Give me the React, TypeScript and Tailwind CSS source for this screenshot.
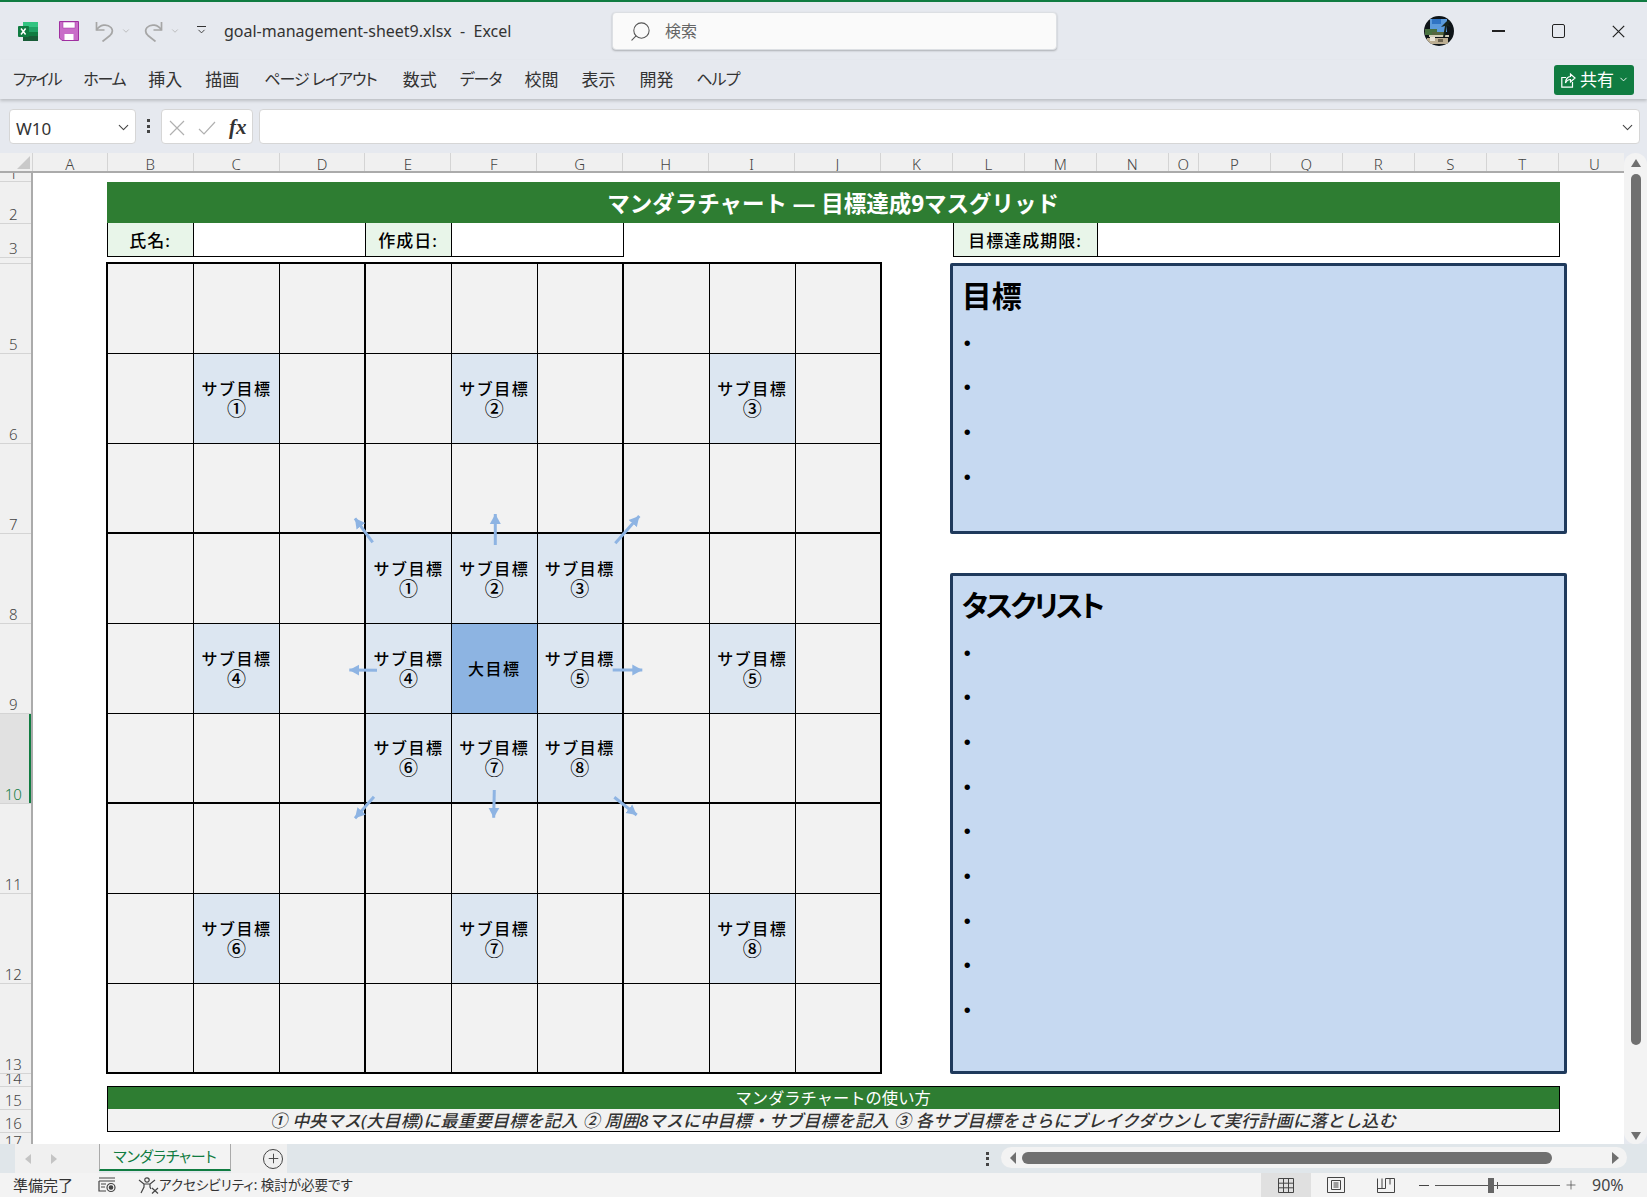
import React from "react";
import { ChevronDown, Plus, Search } from "lucide-react";

const palt = "[font-feature-settings:'palt']";

const tabs: [string, string][] = [
  ["ファイル", "text-[16px] tracking-[-2px]"],
  ["ホーム", "text-[16px] tracking-[-1.300px]"],
  ["挿入", "text-[17px]"],
  ["描画", "text-[17px]"],
  ["ページ レイアウト", "ml-[2px] mr-[3px] text-[16px] tracking-[-1px]"],
  ["数式", "text-[17px]"],
  ["データ", "text-[16px] tracking-[-1px]"],
  ["校閲", "text-[17px]"],
  ["表示", "text-[17px]"],
  ["開発", "ml-[1px] text-[17px]"],
  ["ヘルプ", "text-[16px] tracking-[-1px]"],
];

const columns: [string, string][] = [
  ["A", "w-[75.2px]"],
  ["B", "w-[85.9px]"],
  ["C", "w-[85.9px]"],
  ["D", "w-[85.9px]"],
  ["E", "w-[85.9px]"],
  ["F", "w-[85.9px]"],
  ["G", "w-[85.9px]"],
  ["H", "w-[85.9px]"],
  ["I", "w-[85.9px]"],
  ["J", "w-[85.9px]"],
  ["K", "w-[72px]"],
  ["L", "w-[72px]"],
  ["M", "w-[72px]"],
  ["N", "w-[72px]"],
  ["O", "w-[30px]"],
  ["P", "w-[72px]"],
  ["Q", "w-[72px]"],
  ["R", "w-[72px]"],
  ["S", "w-[72px]"],
  ["T", "w-[72px]"],
  ["U", "w-[72px]"],
];

const rows: [string, string][] = [
  ["1", "h-[9.3px] items-end"],
  ["2", "h-[41.3px] items-end pb-[1px]"],
  ["3", "h-[34px] items-end pb-[1px]"],
  ["", "h-[6px] items-end"],
  ["5", "h-[90px] items-end pb-[1px]"],
  ["6", "h-[90px] items-end pb-[1px]"],
  ["7", "h-[90px] items-end pb-[1px]"],
  ["8", "h-[90px] items-end pb-[1px]"],
  ["9", "h-[90px] items-end pb-[1px]"],
  ["10", "h-[90px] items-end pb-[1px] bg-[#e1e1e1] text-[#107c41]"],
  ["11", "h-[90px] items-end pb-[1px]"],
  ["12", "h-[90px] items-end pb-[1px]"],
  ["13", "h-[90px] items-end pb-[1px]"],
  ["14", "h-[13px] items-end"],
  ["15", "h-[23px] items-end pb-[1px]"],
  ["16", "h-[23px] items-end pb-[1px]"],
  ["17", "h-[12px] items-start"],
];

const subCells: Record<string, string> = {
  "1-1": "①", "1-4": "②", "1-7": "③",
  "4-1": "④", "4-7": "⑤",
  "7-1": "⑥", "7-4": "⑦", "7-7": "⑧",
  "3-3": "①", "3-4": "②", "3-5": "③",
  "4-3": "④", "4-5": "⑤",
  "5-3": "⑥", "5-4": "⑦", "5-5": "⑧",
};

const arrows = [
  [265.7, 279.3, 248, 255.3],
  [388.3, 282, 388.3, 251],
  [508.3, 280.3, 532.3, 253],
  [270, 407.3, 242.3, 407],
  [505.7, 407, 535.3, 407],
  [267, 533.7, 248, 555.3],
  [387.3, 527, 386.7, 554.7],
  [507.3, 534.3, 529.7, 552],
];

const ExcelIcon = () => (
  <svg width="21" height="21" viewBox="0 0 21 21">
    <rect x="5" y="1" width="15" height="19" rx="1" fill="#21a366" />
    <rect x="5" y="1" width="15" height="5" fill="#33c481" />
    <rect x="12" y="6" width="8" height="5" fill="#21a366" />
    <rect x="5" y="11" width="15" height="4" fill="#107c41" />
    <rect x="5" y="15" width="15" height="5" fill="#185c37" />
    <rect x="0" y="5" width="11" height="11" rx="1" fill="#107c41" />
    <path d="M3 7.500l4.600 6M7.600 7.500L3 13.500" stroke="#fff" strokeWidth="1.500" fill="none" />
  </svg>
);

const SaveIcon = () => (
  <svg width="20" height="20" viewBox="0 0 20 20">
    <path d="M.5.500h19v19H3l-2.500-2.500z" fill="#c86dc8" stroke="#a02fa0" />
    <rect x="4" y="1" width="12" height="6" fill="#fff" stroke="#a02fa0" strokeWidth=".5" />
    <rect x="5.500" y="13" width="9" height="6" fill="#fff" />
  </svg>
);

const UndoIcon = ({ flip }: { flip?: boolean }) => (
  <svg width="19" height="21" viewBox="0 0 19 21" className={flip ? "-scale-x-100" : ""} fill="none" stroke="#a6a6a6" strokeWidth="1.700">
    <path d="M1.500 1v8h8" />
    <path d="M1.500 9C5 3.500 12 2.500 16 6.500c2.500 3 1 6-1 8L7.500 20.500" />
  </svg>
);

const Cross = ({ size, color, width = 1.2 }: { size: number; color: string; width?: number }) => (
  <svg width={size} height={size} viewBox="0 0 16 16" fill="none" stroke={color} strokeWidth={width}>
    <path d="M1 1l14 14M15 1L1 15" />
  </svg>
);

const ShareIcon = () => (
  <svg width="15" height="16" viewBox="0 0 15 16" fill="none" stroke="#fff" strokeWidth="1.200">
    <path d="M5 5.500H.8v9.700h10.700V10" />
    <path d="M4.500 11c0-4 2.500-6.500 5-6.500V2L14 6l-4.500 4V7.500C7.500 7.500 5.500 9 4.500 11z" />
  </svg>
);

const Avatar = () => (
  <svg width="30" height="30" viewBox="0 0 30 30">
    <defs>
      <clipPath id="avatar-clip">
        <circle cx="15" cy="15" r="15" />
      </clipPath>
    </defs>
    <g clipPath="url(#avatar-clip)">
      <rect width="30" height="30" fill="#0e1418" />
      <rect x="6" y="3" width="17" height="13" fill="#5b9bdc" />
      <rect x="8" y="3" width="9" height="5" fill="#2f74c4" />
      <rect x="1" y="13" width="12" height="6" fill="#47703f" />
      <rect x="5" y="19" width="20" height="2" fill="#d0cdb8" />
      <rect x="8" y="16" width="12" height="3" fill="#55663f" />
      <rect x="3" y="22" width="21" height="6" fill="#bcae92" />
      <rect x="6" y="21" width="5" height="4" fill="#e9e5d8" />
      <rect x="14" y="23" width="5" height="3" fill="#6d6450" />
      <path d="M21 7c2-3 5-3 6-2l-3 3 3 3-4-1-2 11h-2l2-11-4 1z" fill="#18251c" />
    </g>
  </svg>
);

const Cell = ({ row, col }: { row: number; col: number }) => {
  const sub = subCells[`${row}-${col}`];
  const center = row === 4 && col === 4;
  return (
    <div
      className={`flex items-center justify-center border-black text-center text-[16px] font-medium leading-[20px] text-black
        ${col === 2 || col === 5 || col === 8 ? "border-r-2" : "border-r"}
        ${row === 2 || row === 5 || row === 8 ? "border-b-2" : "border-b"}
        ${center ? "bg-[#8db4e2]" : sub ? "bg-[#dce6f1]" : "bg-[#f2f2f2]"}`}
    >
      {center ? (
        <span className="tracking-[1.500px]">大目標</span>
      ) : sub ? (
        <div>
          <div className="tracking-[1.500px]">サブ目標</div>
          <div className="text-[19px]">{sub}</div>
        </div>
      ) : null}
    </div>
  );
};

const Panel = ({ title, count, height, titleClass }: { title: string; count: number; height: string; titleClass: string }) => (
  <div className={`${height} rounded-[2px] border-[3px] border-[#1f3a5c] bg-[#c6d9f1] pl-[9px] text-black`}>
    <div className={`flex h-[54px] items-center pt-[5px] font-bold ${titleClass} ${palt}`}>{title}</div>
    {Array.from({ length: count }, (_, i) => (
      <div key={i} className="flex h-[44.7px] items-center pl-[2px] text-[20px] [font-family:'Liberation_Sans',sans-serif]">•</div>
    ))}
  </div>
);

export default function App() {
  return (
    <div className="flex h-[1197px] w-[1647px] flex-col overflow-hidden bg-[#e6e9ef] text-[#333] [font-family:'Noto_Sans','Noto_Sans_CJK_JP',sans-serif]">
      <div className="h-[2px] bg-[#107c41]" />

      {/* title bar */}
      <div className="flex h-[58px] items-center">
        <div className="ml-[18px]"><ExcelIcon /></div>
        <div className="ml-[20px]"><SaveIcon /></div>
        <div className="ml-[16px]"><UndoIcon /></div>
        <ChevronDown size={10} className="ml-[7px] text-[#b5b5b5]" />
        <div className="ml-[13px]"><UndoIcon flip /></div>
        <ChevronDown size={10} className="ml-[7px] text-[#b5b5b5]" />
        <div className="ml-[16px] flex flex-col items-center">
          <div className="h-[1px] w-[9px] bg-[#333]" />
          <ChevronDown size={11} className="-mt-[1px] text-[#333]" />
        </div>
        <div className="ml-[17px] w-[388px] whitespace-nowrap text-[16px] text-[#333]">goal-management-sheet9.xlsx&nbsp; - &nbsp;Excel</div>
        <div className="flex h-[38px] w-[445px] items-center rounded-[4px] border border-[#dcdfe3] bg-[#fafafa] pl-[16px] shadow-[0_1px_2px_rgba(0,0,0,0.25)]">
          <Search size={23} strokeWidth={1.100} className="-scale-x-100 text-[#555]" />
          <span className="ml-[13px] text-[16px] text-[#666]">検索</span>
        </div>
        <div className="ml-[367px]"><Avatar /></div>
        <div className="ml-[38px] h-[1.500px] w-[13px] bg-[#222]" />
        <div className="ml-[47px] h-[14px] w-[13px] rounded-[2px] border-[1.500px] border-[#222]" />
        <div className="ml-[47px]"><Cross size={13} color="#222" width={1.500} /></div>
      </div>

      {/* ribbon tabs */}
      <div className="flex h-[39px] items-center shadow-[0_2px_3px_rgba(0,0,0,0.18)]">
        <div className={`flex flex-1 gap-[23px] pl-[13px] text-[#333] ${palt}`}>
          {tabs.map(([t, cls]) => (
            <span key={t} className={`whitespace-nowrap ${cls}`}>{t}</span>
          ))}
        </div>
        <div className="mr-[13px] flex h-[30px] w-[80px] items-center gap-[4px] rounded-[3px] bg-[#107c41] pl-[7px] text-[17px] text-white">
          <ShareIcon />
          <span>共有</span>
          <ChevronDown size={11} strokeWidth={2} />
        </div>
      </div>

      {/* formula bar */}
      <div className="flex h-[54px] items-start pt-[10px]">
        <div className="ml-[9px] flex h-[35px] w-[127px] items-center justify-between rounded-[4px] border border-[#d6d6d6] bg-white pl-[6px] pr-[3px] pt-[2px] text-[17px] text-[#333]">
          <span className="pt-[2px]">W10</span>
          <ChevronDown size={17} strokeWidth={1.500} className="text-[#444]" />
        </div>
        <div className="ml-[11px] mt-[10px] flex w-[3px] flex-col gap-[2.500px]">
          <div className="h-[3px] bg-[#444]" />
          <div className="h-[3px] bg-[#444]" />
          <div className="h-[3px] bg-[#444]" />
        </div>
        <div className="ml-[11px] flex h-[35px] w-[92px] items-center rounded-[4px] border border-[#d6d6d6] bg-white pl-[7px] pt-[2px]">
          <Cross size={16} color="#b0b0b0" />
          <svg width="18" height="14" viewBox="0 0 18 14" fill="none" stroke="#b0b0b0" strokeWidth="1.200" className="ml-[13px]">
            <path d="M1 8l5 5L17 1" />
          </svg>
          <span className="ml-[13px] text-[21px] font-bold italic leading-none text-[#333] [font-family:'Liberation_Serif',serif]">fx</span>
        </div>
        <div className="ml-[6px] flex h-[35px] w-[1381px] items-center justify-end rounded-[4px] border border-[#d6d6d6] bg-white pr-[3px] pt-[2px]">
          <ChevronDown size={17} strokeWidth={1.500} className="text-[#444]" />
        </div>
      </div>

      {/* sheet */}
      <div className="flex h-[991px]">
        <div className="flex w-[1624px] flex-col bg-white">
          <div className="flex h-[20px] overflow-hidden border-b-2 border-[#ababab] bg-[#f0f0f0] text-[15px] font-light leading-[18px] text-[#444]">
            <div className="flex h-full w-[32.6px] shrink-0 items-end justify-end border-r border-[#d4d4d4] p-[2px]">
              <div className="h-0 w-0 border-b-[13px] border-l-[13px] border-b-[#c9c9c9] border-l-transparent" />
            </div>
            {columns.map(([name, width]) => (
              <div key={name} className={`${width} shrink-0 border-r border-[#d4d4d4] pt-[2px] text-center`}>{name}</div>
            ))}
          </div>

          <div className="flex flex-1 overflow-hidden">
            <div className="w-[32.6px] shrink-0 border-r-2 border-[#ababab] bg-[#f0f0f0] text-[15px] font-light leading-[16px] text-[#444]">
              {rows.map(([name, cls], i) => (
                <div key={i} className={`relative flex ${cls} justify-center overflow-hidden border-b border-[#d4d4d4] pr-[4px]`}>
                  {name}
                  {name === "10" && <div className="absolute bottom-0 right-0 top-0 w-[2px] bg-[#107c41]" />}
                </div>
              ))}
            </div>

            <div className="pl-[74px] pt-[9.3px]">
              <div className="flex h-[41px] w-[1453px] items-center justify-center bg-[#2e7d32] pt-[3px] text-[22.500px] font-bold text-white">
                マンダラチャート — 目標達成9マスグリッド
              </div>

              <div className="flex h-[34px] text-[17px] font-medium tracking-[1px] text-black">
                <div className="flex w-[517px] border-b border-l border-r border-black">
                  <div className="flex w-[86px] items-center justify-center border-r border-black bg-[#e8f5e9] pt-[2px]">氏名:</div>
                  <div className="w-[172px] border-r border-black" />
                  <div className="flex w-[86px] items-center justify-center border-r border-black bg-[#e8f5e9] pt-[2px]">作成日:</div>
                </div>
                <div className="ml-[329px] flex w-[607px] border-b border-l border-r border-black">
                  <div className="flex w-[144px] items-center justify-center border-r border-black bg-[#e8f5e9] pt-[2px]">目標達成期限:</div>
                </div>
              </div>

              <div className="mt-[5px] flex">
                <div className="relative -ml-[0.6px] grid grid-cols-[repeat(9,85.97px)] grid-rows-[repeat(9,90px)] border-l-2 border-t-2 border-black">
                  {Array.from({ length: 81 }, (_, i) => (
                    <Cell key={i} row={Math.floor(i / 9)} col={i % 9} />
                  ))}
                  <svg width="775" height="811" className="absolute -left-[1px] -top-[1.3px] overflow-visible">
                    <defs>
                      <marker id="head" markerUnits="userSpaceOnUse" markerWidth="12" markerHeight="12" refX="10" refY="6" orient="auto">
                        <path d="M0 .5L10 6L0 11.500z" fill="#8eb4e3" />
                      </marker>
                    </defs>
                    {arrows.map(([x1, y1, x2, y2], i) => (
                      <line key={i} x1={x1} y1={y1} x2={x2} y2={y2} stroke="#8eb4e3" strokeWidth="3" markerEnd="url(#head)" />
                    ))}
                  </svg>
                </div>
                <div className="ml-[68px] mt-[1px] flex w-[617px] flex-col gap-[39px]">
                  <Panel title="目標" count={4} height="h-[271px]" titleClass="text-[30px]" />
                  <Panel title="タスクリスト" count={9} height="h-[501px]" titleClass="text-[29px] tracking-[-2.600px]" />
                </div>
              </div>

              <div className="mt-[12px] w-[1453px] border border-black text-center">
                <div className="flex h-[22px] items-center justify-center bg-[#2e7d32] text-[16.300px] text-white">マンダラチャートの使い方</div>
                <div className="flex h-[22px] items-center justify-center whitespace-nowrap bg-[#f2f2f2] text-[17px] font-medium italic tracking-[0.2px] text-[#333]">
                  ① 中央マス(大目標)に最重要目標を記入 ② 周囲8マスに中目標・サブ目標を記入 ③ 各サブ目標をさらにブレイクダウンして実行計画に落とし込む
                </div>
              </div>
            </div>
          </div>
        </div>

        {/* vertical scrollbar */}
        <div className="flex h-[991px] w-[23px] flex-col items-center rounded-full bg-[#f3f3f3]">
          <div className="mt-[6px] h-0 w-0 border-x-[5px] border-b-[8px] border-x-transparent border-b-[#707070]" />
          <div className="mt-[7px] h-[871px] w-[10px] shrink-0 rounded-full bg-[#707070]" />
          <div className="mt-[87px] h-0 w-0 border-x-[5px] border-t-[8px] border-x-transparent border-t-[#707070]" />
        </div>
      </div>

      {/* sheet tabs */}
      <div className="flex h-[29px] items-stretch bg-[#e0e6ea]">
        <div className="ml-[15px] flex w-[84px] items-center gap-[20px] bg-[#f0f0f0] pl-[10px]">
          <div className="h-0 w-0 border-y-[5px] border-r-[6px] border-y-transparent border-r-[#c4c4c4]" />
          <div className="h-0 w-0 border-y-[5px] border-l-[6px] border-y-transparent border-l-[#c4c4c4]" />
        </div>
        <div className={`flex h-[27px] w-[132px] items-center justify-center border-b-[2px] border-x border-x-[#aaa] border-b-[#107c41] bg-[#f3f3f3] text-[15px] tracking-[-0.3px] text-[#107c41] ${palt}`}>
          マンダラチャート
        </div>
        <div className="flex w-[56px] items-center justify-end bg-[#f0f0f0] pr-[4px]">
          <div className="flex h-[20px] w-[20px] items-center justify-center rounded-full border border-[#444]">
            <Plus size={15} strokeWidth={1.500} className="text-[#444]" />
          </div>
        </div>
        <div className="ml-[693px] flex w-[14px] flex-col items-center justify-center gap-[2.500px]">
          <div className="h-[3px] w-[3px] bg-[#444]" />
          <div className="h-[3px] w-[3px] bg-[#444]" />
          <div className="h-[3px] w-[3px] bg-[#444]" />
        </div>
        <div className="ml-[7px] mt-[3px] flex h-[21px] w-[626px] items-center rounded-full bg-[#f3f3f3] pl-[9px]">
          <div className="h-0 w-0 border-y-[6px] border-r-[6px] border-y-transparent border-r-[#707070]" />
          <div className="ml-[6px] h-[12px] w-[530px] shrink-0 rounded-full bg-[#707070]" />
          <div className="ml-[60px] h-0 w-0 border-y-[6px] border-l-[7px] border-y-transparent border-l-[#707070]" />
        </div>
      </div>

      {/* status bar */}
      <div className={`flex h-[24px] items-center bg-[#f3f3f3] text-[#333] ${palt}`}>
        <span className="ml-[13px] text-[15px]">準備完了</span>
        <svg width="19" height="16" viewBox="0 0 19 16" fill="none" stroke="#444" strokeWidth="1.200" className="ml-[25px]">
          <path d="M1 1h16M1 4h16M1 4v10h7M3 7h5M3 10h4" />
          <circle cx="13" cy="10.500" r="4" />
          <circle cx="13" cy="10.500" r="1.700" fill="#444" />
        </svg>
        <svg width="21" height="17" viewBox="0 0 21 17" fill="none" stroke="#444" strokeWidth="1.200" className="ml-[21px]">
          <circle cx="9" cy="3" r="2.200" />
          <path d="M1 3l5 4v3l-3 6M17 3l-5 4v3l1 2M6 7h6" />
          <path d="M14 11l6 5.500M20 11l-6 5.500" />
        </svg>
        <span className="whitespace-nowrap text-[13.500px]">アクセシビリティ: 検討が必要です</span>
        <div className="ml-auto flex h-full w-[50px] items-center justify-center bg-[#e0e0e0]">
          <svg width="16" height="15" viewBox="0 0 16 15" fill="none" stroke="#444">
            <path d="M.5.500h15v14H.5zM5.500.500v14M10.500.500v14M.5 5.200h15M.5 9.800h15" />
          </svg>
        </div>
        <svg width="18" height="16" viewBox="0 0 18 16" fill="none" stroke="#444" className="ml-[16px]">
          <path d="M.5.500h17v15H.5z" />
          <path d="M4.500 3.500h9v9h-9zM6.500 6h5M6.500 8h5M6.500 10h5" />
        </svg>
        <svg width="18" height="15" viewBox="0 0 18 15" fill="none" stroke="#444" className="ml-[32px]">
          <path d="M.5.500v14h17V.5M.5 10.500h8V.5h9M5 .5v10M13 .5v6" />
        </svg>
        <span className="ml-[24px] h-[1px] w-[10px] bg-[#444]" />
        <div className="relative ml-[6px] h-[1px] w-[125px] bg-[#555]">
          <div className="absolute left-[53px] top-[-7px] h-[15px] w-[6px] bg-[#666]" />
          <div className="absolute left-[62px] top-[-3px] h-[7px] w-[1px] bg-[#555]" />
        </div>
        <div className="ml-[4px]"><Plus size={14} strokeWidth={1.200} className="text-[#444]" /></div>
        <span className="ml-[14px] mr-[23px] w-[32px] whitespace-nowrap text-[16px] text-[#444]">90%</span>
      </div>
    </div>
  );
}
